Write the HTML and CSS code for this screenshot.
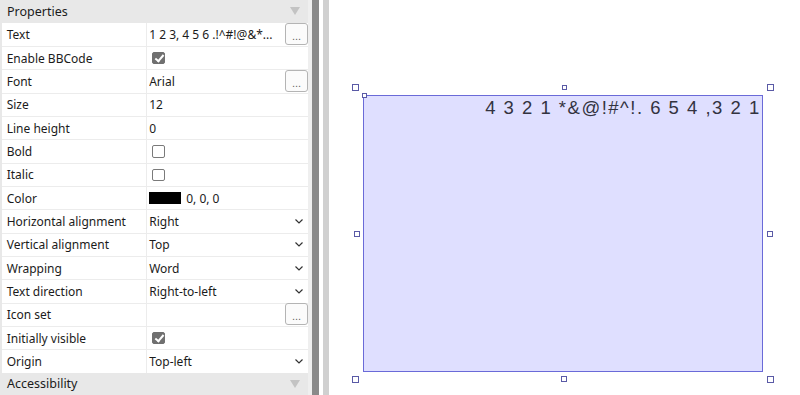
FILE: index.html
```html
<!DOCTYPE html>
<html lang="en">

<head>
  <meta charset="UTF-8">
  <meta name="viewport" content="width=device-width, initial-scale=1.0">
  <title>Text properties</title>
  <link rel="stylesheet" href="styles.css">
</head>

<body>
  <div class="app">
    <aside class="panel">
      <div class="group">Properties<span class="tri"></span></div>
      <div class="rows">
        <div class="row">
          <div class="name">Text</div>
          <div class="value"><span class="clip">1 2 3, 4 5 6 .!^#!@&amp;*...</span><button class="dots">...</button></div>
        </div>
        <div class="row">
          <div class="name">Enable BBCode</div>
          <div class="value"><span class="check on"></span></div>
        </div>
        <div class="row">
          <div class="name">Font</div>
          <div class="value"><span class="clip">Arial</span><button class="dots">...</button></div>
        </div>
        <div class="row">
          <div class="name">Size</div>
          <div class="value">12</div>
        </div>
        <div class="row">
          <div class="name">Line height</div>
          <div class="value">0</div>
        </div>
        <div class="row">
          <div class="name">Bold</div>
          <div class="value"><span class="check"></span></div>
        </div>
        <div class="row">
          <div class="name">Italic</div>
          <div class="value"><span class="check"></span></div>
        </div>
        <div class="row">
          <div class="name">Color</div>
          <div class="value"><span class="swatch"></span>0, 0, 0</div>
        </div>
        <div class="row">
          <div class="name">Horizontal alignment</div>
          <div class="value select">Right<svg class="chev" width="8" height="5" viewBox="0 0 8 5"><polyline points="0.5,0.5 4,4 7.5,0.5" /></svg></div>
        </div>
        <div class="row">
          <div class="name">Vertical alignment</div>
          <div class="value select">Top<svg class="chev" width="8" height="5" viewBox="0 0 8 5"><polyline points="0.5,0.5 4,4 7.5,0.5" /></svg></div>
        </div>
        <div class="row">
          <div class="name">Wrapping</div>
          <div class="value select">Word<svg class="chev" width="8" height="5" viewBox="0 0 8 5"><polyline points="0.5,0.5 4,4 7.5,0.5" /></svg></div>
        </div>
        <div class="row">
          <div class="name">Text direction</div>
          <div class="value select">Right-to-left<svg class="chev" width="8" height="5" viewBox="0 0 8 5"><polyline points="0.5,0.5 4,4 7.5,0.5" /></svg></div>
        </div>
        <div class="row">
          <div class="name">Icon set</div>
          <div class="value"><span class="clip"></span><button class="dots">...</button></div>
        </div>
        <div class="row">
          <div class="name">Initially visible</div>
          <div class="value"><span class="check on"></span></div>
        </div>
        <div class="row">
          <div class="name">Origin</div>
          <div class="value select">Top-left<svg class="chev" width="8" height="5" viewBox="0 0 8 5"><polyline points="0.5,0.5 4,4 7.5,0.5" /></svg></div>
        </div>
      </div>
      <div class="group">Accessibility<span class="tri"></span></div>
    </aside>

    <div class="splitter">
      <span class="edge"></span>
      <span class="grip"></span>
      <span class="gap"></span>
      <span class="rule"></span>
    </div>

    <main class="canvas">
      <div class="handle big" style="left: 23px; top: 84px"></div>
      <div class="handle mid" style="left: 233px; top: 85px"></div>
      <div class="handle big" style="left: 438px; top: 84px"></div>
      <div class="handle" style="left: 25px; top: 231px"></div>
      <div class="handle" style="left: 438px; top: 231px"></div>
      <div class="handle big" style="left: 23px; top: 376px"></div>
      <div class="handle" style="left: 232px; top: 376px"></div>
      <div class="handle big" style="left: 438px; top: 376px"></div>

      <div class="textbox">4 3 2 1 *&amp;@!#^!. 6 5 4 ,3 2 1</div>
      <div class="origin"></div>
    </main>
  </div>
</body>

</html>
```

FILE: styles.css
```css
* {
  padding: 0;
  margin: 0;
  box-sizing: border-box;
}

body {
  font-family: "Noto Sans", "Noto Sans CJK SC", sans-serif;
  font-size: 12px;
  color: #1b1b1b;
  background-color: #fff;
}

.app {
  display: flex;
  height: 395px;
  overflow: hidden;
}

/* 属性面板 */
.panel {
  width: 308px;
  flex: none;
  background-color: #e8e8e8;
}

.group {
  display: flex;
  align-items: center;
  justify-content: space-between;
  height: 22.7px;
  padding: 0 8px 0 7px;
  font-size: 12.5px;
}

.tri {
  width: 0;
  height: 0;
  border-left: 5.5px solid transparent;
  border-right: 5.5px solid transparent;
  border-top: 8px solid #c3c3c3;
}

.rows {
  margin-left: 2px;
  background-color: #fff;
}

.row {
  display: grid;
  grid-template-columns: 144.7px 1fr;
  height: 23.33px;
  border-top: 1px solid #ececec;
}

.row:first-child {
  border-top: none;
}

.name {
  display: flex;
  align-items: center;
  padding-left: 4.7px;
  border-right: 1px solid #ececec;
  white-space: nowrap;
}

.value {
  display: flex;
  align-items: center;
  padding-left: 2.5px;
  white-space: nowrap;
}

.select {
  justify-content: space-between;
  padding-right: 5px;
}

.clip {
  flex: 1;
  overflow: hidden;
}

.chev {
  fill: none;
  stroke: #333;
  stroke-width: 1.2;
}

.dots {
  flex: none;
  width: 23px;
  height: 22px;
  margin-top: -1px;
  padding-top: 4px;
  border: 1px solid #b4b4b4;
  border-radius: 3px;
  background-color: #fbfbfb;
  color: #666;
  font: 11px/12px "Liberation Sans", Arial, sans-serif;
}

.check {
  width: 12.5px;
  height: 12.5px;
  margin-left: 3px;
  border: 1px solid #7a7a7a;
  border-radius: 2px;
  background-color: #fff;
}

.check.on {
  position: relative;
  background-color: #707070;
  border-color: #707070;
}

.check.on::after {
  content: "";
  position: absolute;
  left: 3.5px;
  top: 0.5px;
  width: 3px;
  height: 7px;
  border-right: 2px solid #fff;
  border-bottom: 2px solid #fff;
  transform: rotate(40deg);
}

.swatch {
  width: 32px;
  height: 12px;
  margin-right: 5px;
  background-color: #000;
}

/* 分隔条 */
.splitter {
  display: flex;
  flex: none;
}

.edge {
  width: 3.5px;
  background-color: #efefef;
}

.grip {
  width: 7.7px;
  background-color: #8a8a8a;
}

.gap {
  width: 3.4px;
  background-color: #fff;
}

.rule {
  width: 6.7px;
  background-color: #d0d0d0;
}

/* 画布 */
.canvas {
  flex: 1;
  position: relative;
  background-color: #fff;
}

.textbox {
  position: absolute;
  left: 34px;
  top: 95px;
  width: 400px;
  height: 277px;
  padding: 2px 1.5px 0 0;
  border: 1px solid #6a6ad8;
  background-color: #dfdfff;
  font: 18.5px/20px "Liberation Sans", Arial, sans-serif;
  letter-spacing: 1.5px;
  color: #33333f;
  text-align: right;
  white-space: nowrap;
}

.handle {
  position: absolute;
  width: 6px;
  height: 6px;
  border: 1px solid #5a5aa6;
  background-color: #fff;
}

.handle.big {
  width: 7px;
  height: 7px;
}

.handle.mid {
  width: 5px;
  height: 5px;
}

.origin {
  position: absolute;
  left: 33px;
  top: 93px;
  width: 5px;
  height: 5px;
  border: 1px solid #5a5aa6;
  background-color: #fff;
}
```
